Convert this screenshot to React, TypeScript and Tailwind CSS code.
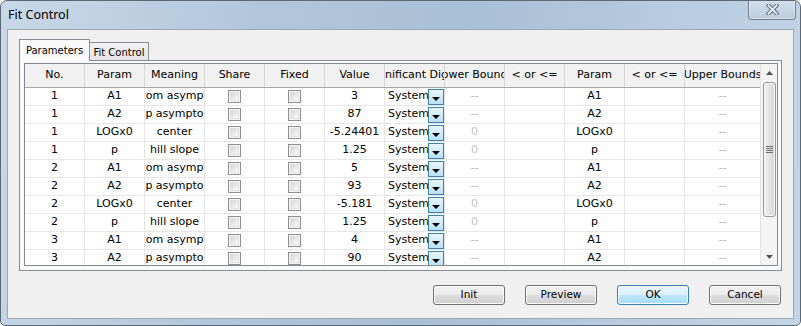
import React from "react";

const rows = [
  { no: "1", param: "A1", meaning: "bottom asymptote", value: "3", lower: "--" },
  { no: "1", param: "A2", meaning: "top asymptote", value: "87", lower: "--" },
  { no: "1", param: "LOGx0", meaning: "center", value: "-5.24401", lower: "0" },
  { no: "1", param: "p", meaning: "hill slope", value: "1.25", lower: "0" },
  { no: "2", param: "A1", meaning: "bottom asymptote", value: "5", lower: "--" },
  { no: "2", param: "A2", meaning: "top asymptote", value: "93", lower: "--" },
  { no: "2", param: "LOGx0", meaning: "center", value: "-5.181", lower: "0" },
  { no: "2", param: "p", meaning: "hill slope", value: "1.25", lower: "0" },
  { no: "3", param: "A1", meaning: "bottom asymptote", value: "4", lower: "--" },
  { no: "3", param: "A2", meaning: "top asymptote", value: "90", lower: "--" },
];

const headers = [
  "No.",
  "Param",
  "Meaning",
  "Share",
  "Fixed",
  "Value",
  "Significant Digits",
  "Lower Bounds",
  "< or <=",
  "Param",
  "< or <=",
];

function CheckBox() {
  return (
    <div className="w-[13px] h-[13px] border border-[#8f8f8f] bg-[#f4f4f4] p-[1px]">
      <div className="w-full h-full border border-[#e2e2e2] bg-gradient-to-br from-[#d6d6d6] to-[#fafafa]" />
    </div>
  );
}

function Cell({ children }: { children?: React.ReactNode }) {
  return (
    <div className="w-[60px] shrink-0 h-full flex items-center justify-center overflow-hidden whitespace-nowrap border-r border-[#e6e6e6]">
      {children}
    </div>
  );
}

function Dash() {
  return <span className="text-[#b3b3b3] text-[11px]">--</span>;
}

function Button({ label, primary }: { label: string; primary?: boolean }) {
  return (
    <div
      className={
        primary
          ? "w-[72px] h-[20px] flex items-center justify-center rounded-[3px] border border-[#3c7fb1] shadow-[inset_0_0_0_1px_#f4fbff] bg-[linear-gradient(to_bottom,#eaf6fd_0%,#d9f0fc_50%,#bee6fd_51%,#a9dbf6_100%)]"
          : "w-[72px] h-[20px] flex items-center justify-center rounded-[3px] border border-[#707070] shadow-[inset_0_0_0_1px_#fbfbfb] bg-[linear-gradient(to_bottom,#f2f2f2_0%,#ebebeb_50%,#dddddd_51%,#cfcfcf_100%)]"
      }
    >
      {label}
    </div>
  );
}

export default function App() {
  return (
    <div className="w-[801px] h-[326px] overflow-hidden rounded-t-[7px] rounded-b-[5px] border border-[#5b6876] bg-[linear-gradient(100deg,#c8d8e8_0%,#b3c7db_30%,#a9bfd5_55%,#b9cce0_80%,#c4d5e6_100%)] flex flex-col font-['DejaVu_Sans',sans-serif] text-black">
      {/* TITLE BAR */}
      <div className="h-[28px] flex items-start shrink-0">
        <div className="pl-[7px] pt-[6px] text-[12.5px] font-['Noto_Sans',sans-serif] leading-[16px]">
          Fit Control
        </div>
        <div className="ml-auto mr-[4px] -mt-px w-[48px] h-[20px] rounded-b-[4px] border border-t-0 border-[#6e7e8f] shadow-[inset_0_0_0_1px_rgba(255,255,255,0.45)] bg-gradient-to-b from-[#d5e1ec] to-[#b9cbdc] flex items-center justify-center">
          <svg width="13" height="11" viewBox="0 0 13 11">
            <path d="M2.5 1.5 L10.5 9.5 M10.5 1.5 L2.5 9.5" stroke="#5a6877" strokeWidth="4" strokeLinecap="square" />
            <path d="M2.5 1.5 L10.5 9.5 M10.5 1.5 L2.5 9.5" stroke="#e6ebf0" strokeWidth="2" strokeLinecap="square" />
          </svg>
        </div>
      </div>

      {/* CLIENT */}
      <div className="flex-1 mx-[6px] mb-[6px] border border-[#9aa8b6] bg-[#f0f0f0] pt-[10px] pl-[11px] pr-[11px] flex flex-col">
        {/* TABS */}
        <div className="h-[21px] flex items-end -mb-px text-[10px]">
          <div className="relative z-10 w-[71px] h-[22px] border border-b-0 border-[#898c95] bg-[#f9f9f9] flex items-center justify-center pb-[1px]">
            Parameters
          </div>
          <div className="w-[59px] h-[19px] border border-l-0 border-b-0 border-[#898c95] bg-gradient-to-b from-[#f2f2f2] to-[#e4e4e4] flex items-center justify-center">
            Fit Control
          </div>
        </div>

        <div className="h-[211px] border border-[#898c95] bg-[#f9f9f9] pl-[4px] pt-[2px] pr-[3px] pb-[4px]">
          <div className="h-[203px] border border-[#828790] bg-white flex text-[11px]">
            <div className="w-[735px] flex flex-col overflow-hidden">
              {/* HEADER */}
              <div className="h-[24px] shrink-0 flex bg-[#f1f1f1] border-b border-[#a5a5a5]">
                {headers.map((h, i) => (
                  <div
                    key={i}
                    className="w-[60px] shrink-0 h-full flex items-center justify-center overflow-hidden whitespace-nowrap border-r border-[#d5d5d5]"
                  >
                    {h}
                  </div>
                ))}
                <div className="w-[75px] shrink-0 h-full flex items-center justify-center overflow-hidden whitespace-nowrap">
                  Upper Bounds
                </div>
              </div>

              {/* ROWS */}
              {rows.map((r, i) => (
                <div key={i} className="h-[18px] shrink-0 flex border-b border-[#e6e6e6]">
                  <Cell>{r.no}</Cell>
                  <Cell>{r.param}</Cell>
                  <Cell>{r.meaning}</Cell>
                  <Cell>
                    <CheckBox />
                  </Cell>
                  <Cell>
                    <CheckBox />
                  </Cell>
                  <Cell>{r.value}</Cell>
                  <div className="w-[60px] shrink-0 h-full flex items-center border-r border-[#e6e6e6]">
                    <div className="flex-1 overflow-hidden whitespace-nowrap pl-[3px]">System</div>
                    <div className="w-[16px] h-[16px] border border-[#3c7fb1] bg-gradient-to-b from-[#eaf6fd] to-[#b9e0f7] flex justify-center pt-[7px]">
                      <svg width="8" height="4" viewBox="0 0 8 4">
                        <path d="M0 0 H8 L4 4 Z" fill="#000" />
                      </svg>
                    </div>
                  </div>
                  <Cell>{r.lower === "--" ? <Dash /> : <span className="text-[#c4c4c4]">0</span>}</Cell>
                  <Cell />
                  <Cell>{r.param}</Cell>
                  <Cell />
                  <div className="w-[75px] shrink-0 h-full flex items-center justify-center">
                    <Dash />
                  </div>
                </div>
              ))}
            </div>

            {/* SCROLLBAR */}
            <div className="w-[17px] h-full border-l border-[#e3e3e3] bg-[#f4f4f4] flex flex-col items-center">
              <div className="h-[18px] w-full flex items-center justify-center">
                <svg width="7" height="4" viewBox="0 0 7 4">
                  <path d="M0 4 H7 L3.5 0 Z" fill="#505050" />
                </svg>
              </div>
              <div className="w-[13px] h-[135px] rounded-[3px] border border-[#979797] shadow-[inset_0_0_0_1px_#f7f7f7] bg-gradient-to-r from-[#f1f1f1] to-[#d5d5d5] flex flex-col items-center justify-center gap-[1px]">
                <div className="w-[7px] h-px bg-[#6e6e6e]" />
                <div className="w-[7px] h-px bg-[#6e6e6e]" />
                <div className="w-[7px] h-px bg-[#6e6e6e]" />
                <div className="w-[7px] h-px bg-[#6e6e6e]" />
              </div>
              <div className="flex-1" />
              <div className="h-[17px] w-full flex items-center justify-center">
                <svg width="7" height="4" viewBox="0 0 7 4">
                  <path d="M0 0 H7 L3.5 4 Z" fill="#505050" />
                </svg>
              </div>
            </div>
          </div>
        </div>

        {/* BUTTONS */}
        <div className="mt-[14px] flex justify-end gap-[20px] pr-[1px] text-[10.5px]">
          <Button label="Init" />
          <Button label="Preview" />
          <Button label="OK" primary />
          <Button label="Cancel" />
        </div>
      </div>
    </div>
  );
}
